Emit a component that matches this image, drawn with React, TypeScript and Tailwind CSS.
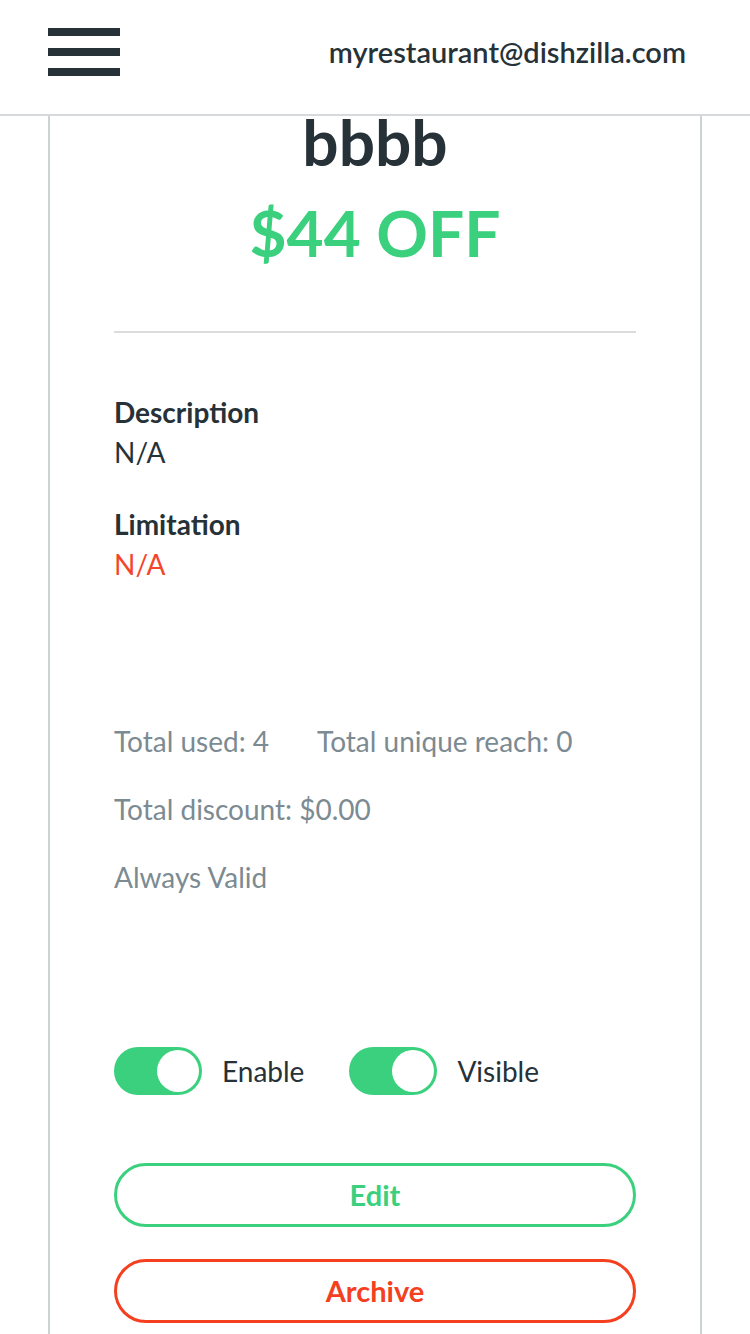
import React, { useState } from 'react';

const font = { fontFamily: 'Lato, "Open Sans", sans-serif' };

const Toggle: React.FC<{ on: boolean; onChange: () => void; label: string }> = ({ on, onChange, label }) => (
  <button type="button" onClick={onChange} className="flex items-center">
    <span
      className={`flex items-center w-[88px] h-[48px] rounded-full p-[3px] ${
        on ? 'bg-[#3ad07d] justify-end' : 'bg-[#cfd4d7] justify-start'
      }`}
    >
      <span className="block w-[42px] h-[42px] rounded-full bg-white" />
    </span>
    <span className="ml-[20px] text-[28px] leading-[40px] text-[#263238]">{label}</span>
  </button>
);

export default function App() {
  const [enabled, setEnabled] = useState(true);
  const [visible, setVisible] = useState(true);

  return (
    <div style={font} className="h-[1334px] w-[750px] overflow-hidden bg-white flex flex-col">
      {/* Top bar */}
      <header className="h-[116px] shrink-0 border-b-2 border-[#d7dadc] flex items-center justify-between pb-[10px] pl-[48px] pr-[64px] relative z-10 bg-white">
        <button type="button" className="flex flex-col gap-[12px] w-[72px]">
          <span className="block h-[8px] w-full bg-[#263238]" />
          <span className="block h-[8px] w-full bg-[#263238]" />
          <span className="block h-[8px] w-full bg-[#263238]" />
        </button>
        <span className="text-[29px] font-semibold text-[#263238]">myrestaurant@dishzilla.com</span>
      </header>

      {/* Coupon card, scrolled so the title sits just under the bar */}
      <main className="flex-1 mx-[48px] border-x-2 border-[#cdd2d5] px-[64px] overflow-hidden">
        <h1 className="-mt-[13px] text-center text-[64px] leading-[77px] font-bold text-[#263238]">bbbb</h1>
        <p className="mt-[14px] text-center text-[64px] leading-[77px] font-bold text-[#3ad07d]">$44 OFF</p>

        <div className="mt-[60px] h-[2px] bg-[#dcdcdc]" />

        <div className="mt-[59px] text-[28px] leading-[40px]">
          <div className="font-bold text-[#263238]">Description</div>
          <div className="text-[#263238]">N/A</div>
        </div>
        <div className="mt-[32px] text-[28px] leading-[40px]">
          <div className="font-bold text-[#263238]">Limitation</div>
          <div className="text-[#f4452a]">N/A</div>
        </div>

        <div className="mt-[137px] flex flex-col gap-[28px] text-[28px] leading-[40px] text-[#7c8a92]">
          <div className="flex gap-[48px]">
            <span>Total used: 4</span>
            <span>Total unique reach: 0</span>
          </div>
          <div>Total discount: $0.00</div>
          <div>Always Valid</div>
        </div>

        <div className="mt-[150px] flex items-center gap-[45px]">
          <Toggle on={enabled} onChange={() => setEnabled(!enabled)} label="Enable" />
          <Toggle on={visible} onChange={() => setVisible(!visible)} label="Visible" />
        </div>

        <button
          type="button"
          className="mt-[68px] w-full h-[64px] rounded-full border-[3px] border-[#3ad07d] text-[29px] font-bold text-[#3ad07d]"
        >
          Edit
        </button>
        <button
          type="button"
          className="mt-[32px] w-full h-[64px] rounded-full border-[3px] border-[#f4401f] text-[29px] font-bold text-[#f4401f]"
        >
          Archive
        </button>
      </main>
    </div>
  );
}
